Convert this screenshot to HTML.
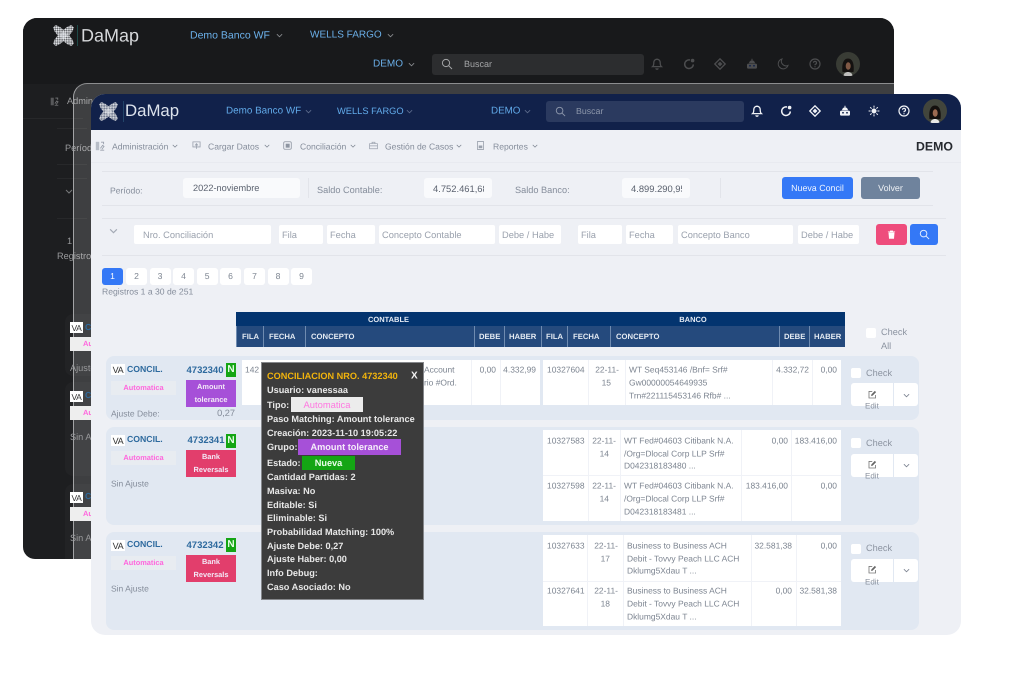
<!DOCTYPE html>
<html lang="es"><head><meta charset="utf-8"><title>DaMap</title>
<style>
*{box-sizing:border-box}
html,body{margin:0;padding:0;background:#fff}
body{width:1024px;height:695px;overflow:hidden;position:relative;font-family:"Liberation Sans",sans-serif;text-rendering:geometricPrecision}
#w{position:absolute;left:0;top:0;width:1024px;height:695px;filter:blur(.35px);overflow:hidden}
.a{position:absolute}
.t{position:absolute;white-space:nowrap;transform:translateY(calc(-50% + .6px));line-height:1}
.g{color:#858d9b;font-size:9.2px}
.m{font-size:8.6px}
.c{text-align:center}
.i{position:absolute;background:#fff;border-radius:2px;height:19px;top:225px;color:#9aa1ad;font-size:9.3px;line-height:20px;padding-left:9px;white-space:nowrap;overflow:hidden}
.pg{position:absolute;top:268px;height:17px;width:21px;background:#fff;border-radius:3px;text-align:center;color:#7d8591;font-size:8.6px;line-height:17px}
.th{position:absolute;top:326px;height:21px;background:#254a7d;border-left:1px solid #6f8bb0;color:#e5ebf3;font-size:7.7px;font-weight:bold;line-height:22px;padding-left:5px;white-space:nowrap}
.rowc{position:absolute;left:106px;width:813px;background:#e1e8f2;border-radius:8px}
.va{position:absolute;left:111px;width:14px;height:11px;background:#fff;color:#333;font-size:9px;line-height:12px;text-align:center;letter-spacing:-.3px}
.con{color:#2e6a9e;font-size:8.7px;font-weight:bold;left:127px}
.num{color:#2e6a9e;font-size:9.5px;font-weight:bold}
.n{position:absolute;left:226px;width:10px;height:14px;background:#14a514;color:#e8ffe8;font-size:10px;font-weight:bold;line-height:14px;text-align:center}
.au{position:absolute;left:111px;width:65px;height:14px;background:#e8ecf1;color:#ff66dd;font-size:7.4px;font-weight:bold;line-height:14px;text-align:center}
.tag{position:absolute;left:186px;width:50px;height:27px;color:#f3e9f7;font-size:7.4px;font-weight:bold;text-align:center;line-height:13.2px}
.tb{position:absolute;background:#fff}
.ln{position:absolute;background:#f0f2f7}
.d{color:#7d8591;font-size:8.45px}
.r{transform:translate(-100%,calc(-50% + .6px))}
.cb{position:absolute;width:10px;height:10px;background:#fff;border-radius:2px}
.chk{color:#8b93a0;font-size:9.2px}
.ed{position:absolute;left:851px;width:42px;height:23px;background:#fff;border-radius:3px 0 0 3px}
.ed2{position:absolute;left:894px;width:24px;height:23px;background:#fff;border-radius:0 3px 3px 0}
.tip{color:#e8e8e8;font-size:9.17px;font-weight:bold;left:267px}
.dk{color:#9a9b9d;font-size:9.2px}
.l{font-size:8.5px}
</style></head><body>
<svg width="0" height="0" style="position:absolute">
<defs>
<pattern id="ck" width="2.4" height="2.4" patternUnits="userSpaceOnUse" patternTransform="rotate(45)"><rect width="1.3" height="1.3" fill="#eceef2"/><rect x="1.2" y="1.2" width="1.2" height="1.2" fill="#eceef2"/></pattern>
<symbol id="logo" viewBox="0 0 20 20"><path d="M0 2.500 2.500 0 6.500 1.800 10 4.500 13.500 1.800 17.500 0 20 2.500 18.200 6.500 15.500 10 18.200 13.500 20 17.500 17.500 20 13.500 18.200 10 15.500 6.500 18.200 2.500 20 0 17.500 1.800 13.500 4.500 10 1.800 6.500Z" fill="#9a9da5" opacity=".45"/><path d="M0 2.500 2.500 0 6.500 1.800 10 4.500 13.500 1.800 17.500 0 20 2.500 18.200 6.500 15.500 10 18.200 13.500 20 17.500 17.500 20 13.500 18.200 10 15.500 6.500 18.200 2.500 20 0 17.500 1.800 13.500 4.500 10 1.800 6.500Z" fill="url(#ck)"/><path d="M10 6 14 10 10 14 6 10Z" fill="#e4e7ec" opacity=".55"/></symbol>
<symbol id="chev" viewBox="0 0 8 5"><path d="M1 1 4 4 7 1" fill="none" stroke="currentColor" stroke-width="1"/></symbol>
<symbol id="srch" viewBox="0 0 12 12"><circle cx="5" cy="5" r="3.6" fill="none" stroke="currentColor" stroke-width="1"/><path d="M7.8 7.8 11 11" stroke="currentColor" stroke-width="1"/></symbol>
<symbol id="bell" viewBox="0 0 12 12"><path d="M6 1.200A3.300 3.300 0 0 0 2.800 4.600c0 3-1.200 4-1.200 4h8.800s-1.200-1-1.200-4A3.300 3.300 0 0 0 6 1.200zM5 10.200a1 1 0 0 0 2 0" fill="none" stroke="currentColor" stroke-width="1.300"/></symbol>
<symbol id="ref" viewBox="0 0 12 12"><path d="M7 2A4.300 4.300 0 1 0 10.300 6.400" fill="none" stroke="currentColor" stroke-width="1.500"/><circle cx="9.600" cy="2.600" r="1.800" fill="currentColor"/></symbol>
<symbol id="dia" viewBox="0 0 12 12"><path d="M6 .8 11.200 6 6 11.200.8 6Z" fill="none" stroke="currentColor" stroke-width="1.300"/><path d="M6 3.600 8.400 6 6 8.400 3.600 6Z" fill="currentColor"/></symbol>
<symbol id="bot" viewBox="0 0 12 12"><path d="M3 5.200C3.400 3.200 4.600 2.400 6 2.400s2.600.8 3 2.800Z" fill="currentColor"/><path d="M6 .8v1.600" stroke="currentColor"/><rect x="1" y="5.600" width="10" height="5" rx="1.400" fill="currentColor"/><circle cx="4" cy="7.800" r=".9" fill="#11214a"/><circle cx="8" cy="7.800" r=".9" fill="#11214a"/></symbol>
<symbol id="sun" viewBox="0 0 12 12"><circle cx="6" cy="6" r="2.200" fill="currentColor" stroke="currentColor" stroke-width=".6"/><path d="M6 .6v2M6 9.400v2M.6 6h2M9.400 6h2M2.200 2.200l1.400 1.400M8.400 8.400l1.400 1.400M9.800 2.200 8.400 3.600M3.600 8.400 2.200 9.800" stroke="currentColor" stroke-width="1"/></symbol>
<symbol id="moon" viewBox="0 0 12 12"><path d="M5 1a5 5 0 1 0 6 6.400A4.600 4.600 0 0 1 5 1Z" fill="none" stroke="currentColor" stroke-width="1"/></symbol>
<symbol id="help" viewBox="0 0 12 12"><circle cx="6" cy="6" r="5" fill="none" stroke="currentColor" stroke-width="1.200"/><path d="M4.500 4.800A1.500 1.500 0 1 1 6.300 6.300C6 6.500 6 6.800 6 7.200M6 8.200v1" fill="none" stroke="currentColor" stroke-width="1.200"/></symbol>
<symbol id="ava" viewBox="0 0 24 24"><circle cx="12" cy="12" r="12" fill="#42453c"/><path d="M6.500 20C5.500 12 7.500 6.500 12 6.500S18.500 12 17.500 20Z" fill="#14100e"/><ellipse cx="12.200" cy="14" rx="2.500" ry="3.800" fill="#9c6a50"/><path d="M7.500 23.500c.5-2.500 2.500-3.500 4.500-3.500s4 1 4.500 3.500a12 12 0 0 1-9 0Z" fill="#e9e9e6"/></symbol>
<symbol id="m1" viewBox="0 0 10 10"><path d="M.8.8h3.400v8.400H.8z" fill="currentColor" opacity=".65"/><path d="M5.200 9.200h4M5.400 7.400 7.600 4.400l1.400 1-2.200 3M6 1.200h2.600v2" fill="none" stroke="currentColor" stroke-width=".9"/></symbol>
<symbol id="m2" viewBox="0 0 10 10"><path d="M1 1h8v5.600H1zM5 8.800V3M3.400 5 5 3l1.600 2" fill="none" stroke="currentColor" stroke-width=".9"/></symbol>
<symbol id="m3" viewBox="0 0 10 10"><rect x=".8" y=".8" width="8.400" height="8.400" rx="1.400" fill="none" stroke="currentColor" stroke-width=".9"/><rect x="3" y="3" width="4.400" height="4.400" fill="currentColor"/></symbol>
<symbol id="m4" viewBox="0 0 10 10"><path d="M.6 3h8.800v5.600H.6zM3.400 3V1.400h3.200V3M.6 5.400h8.800" fill="none" stroke="currentColor" stroke-width=".8"/></symbol>
<symbol id="m5" viewBox="0 0 10 10"><path d="M1.600.6h6.800v8.800H1.600z" fill="none" stroke="currentColor" stroke-width=".9"/><rect x="3" y="5" width="4" height="3" fill="currentColor"/></symbol>
<symbol id="trash" viewBox="0 0 10 10"><path d="M1 2h8M3.600 2V1h2.800v1M2 3h6l-.5 6.400h-5Z" fill="currentColor" stroke="currentColor" stroke-width=".6"/></symbol>
<symbol id="edit" viewBox="0 0 10 10"><path d="M8.400 5.500v3.400H1.100V1.600h3.600" fill="none" stroke="#777" stroke-width=".9"/><path d="M3.400 6.600 3.800 4.800 7.600 1 9 2.400 5.200 6.200Z" fill="#666"/></symbol>
</defs></svg>
<div id="w">

<!-- dark window -->
<div class="a" style="left:23px;top:18px;width:871px;height:541px;background:#1d1e20;border-radius:14px 14px 0 12px;overflow:hidden">
 <div class="a" style="left:0;top:0;width:871px;height:66px;background:#18191b"></div>
</div>
<svg class="a" style="left:53px;top:25px" width="21" height="21"><use href="#logo"/></svg>
<div class="a" style="left:77px;top:25px;width:1px;height:21px;background:#1e4a48"></div>
<div class="t" style="left:81px;top:35px;font-size:18px;color:#d7d9dc">DaMap</div>
<div class="t" style="left:190px;top:35px;font-size:10.5px;color:#6bb0ea">Demo Banco WF</div>
<svg class="a" style="left:276px;top:33px;color:#8a8c90" width="7" height="5"><use href="#chev"/></svg>
<div class="t" style="left:310px;top:35px;font-size:10px;color:#6bb0ea">WELLS FARGO</div>
<svg class="a" style="left:387px;top:33px;color:#8a8c90" width="7" height="5"><use href="#chev"/></svg>
<div class="t" style="left:373px;top:64px;font-size:10px;color:#6bb0ea">DEMO</div>
<svg class="a" style="left:408px;top:62px;color:#8a8c90" width="7" height="5"><use href="#chev"/></svg>
<div class="a" style="left:432px;top:54px;width:212px;height:21px;background:#2c2d2f;border-radius:3px"></div>
<svg class="a" style="left:441px;top:58px;color:#a5a6a8" width="12" height="12"><use href="#srch"/></svg>
<div class="t" style="left:464px;top:64px;font-size:9px;color:#a5a6a8">Buscar</div>
<svg class="a" style="left:651px;top:58px;color:#4c4d4f" width="12" height="12"><use href="#bell"/></svg>
<svg class="a" style="left:683px;top:58px;color:#4c4d4f" width="12" height="12"><use href="#ref"/></svg>
<svg class="a" style="left:714px;top:58px;color:#4c4d4f" width="12" height="12"><use href="#dia"/></svg>
<svg class="a" style="left:746px;top:58px;color:#4c4d4f" width="12" height="12"><use href="#bot"/></svg>
<svg class="a" style="left:777px;top:58px;color:#4c4d4f" width="12" height="12"><use href="#moon"/></svg>
<svg class="a" style="left:809px;top:58px;color:#4c4d4f" width="12" height="12"><use href="#help"/></svg>
<svg class="a" style="left:836px;top:52px;opacity:.8" width="24" height="24"><use href="#ava"/></svg>
<svg class="a" style="left:50px;top:97px;color:#77787a" width="9" height="9"><use href="#m1"/></svg>
<div class="t dk" style="left:67px;top:101px">Admin</div>
<div class="a" style="left:23px;top:118px;width:60px;height:1px;background:#27282a"></div>
<div class="a" style="left:57px;top:128px;width:30px;height:1px;background:#27282a"></div>
<div class="t dk" style="left:65px;top:148px">Período</div>
<div class="a" style="left:57px;top:164px;width:30px;height:1px;background:#27282a"></div>
<div class="a" style="left:57px;top:178px;width:30px;height:1px;background:#27282a"></div>
<svg class="a" style="left:65px;top:189px;color:#77787a" width="8" height="5"><use href="#chev"/></svg>
<div class="a" style="left:57px;top:218px;width:30px;height:1px;background:#27282a"></div>
<div class="t dk" style="left:67px;top:241px">1</div>
<div class="t dk" style="left:57px;top:256px">Registros</div>
<div class="a" style="left:65px;top:314px;width:30px;height:62px;background:#222325;border-radius:8px 0 0 8px"></div>
<div class="a" style="left:65px;top:382px;width:30px;height:94px;background:#222325;border-radius:8px 0 0 8px"></div>
<div class="a" style="left:65px;top:484px;width:30px;height:75px;background:#222325;border-radius:8px 0 0 0"></div>

<!-- translucent middle window -->
<div class="a" style="left:73px;top:83px;width:821px;height:476px;background:rgba(255,255,255,.15);border-left:1px solid #a2a3a5;border-top:1px solid #8c8d8f;border-radius:14px 0 0 0"></div>
<div class="a va" style="left:70px;top:322px;width:13px;height:11px;font-size:8.5px">VA</div>
<div class="a" style="left:70px;top:337px;width:25px;height:14px;background:#eee;color:#ff66dd;font-size:7.5px;font-weight:bold;line-height:14px;padding-left:13px;overflow:hidden">Au</div>
<div class="t dk" style="left:70px;top:368px">Ajuste</div>
<div class="t con" style="left:85px;top:327px">C</div>
<div class="a va" style="left:70px;top:391px;width:13px;height:11px;font-size:8.5px">VA</div>
<div class="a" style="left:70px;top:406px;width:25px;height:14px;background:#eee;color:#ff66dd;font-size:7.5px;font-weight:bold;line-height:14px;padding-left:13px;overflow:hidden">Au</div>
<div class="t dk" style="left:70px;top:437px">Sin Aj</div>
<div class="t con" style="left:85px;top:395px">C</div>
<div class="a va" style="left:70px;top:492px;width:13px;height:11px;font-size:8.5px">VA</div>
<div class="a" style="left:70px;top:507px;width:25px;height:14px;background:#eee;color:#ff66dd;font-size:7.5px;font-weight:bold;line-height:14px;padding-left:13px;overflow:hidden">Au</div>
<div class="t dk" style="left:70px;top:538px">Sin Aj</div>
<div class="t con" style="left:85px;top:496px">C</div>

<!-- light window -->
<div class="a" style="left:91px;top:94px;width:870px;height:541px;background:#eef0f5;border-radius:14px"></div>
<div class="a" style="left:91px;top:94px;width:870px;height:36px;background:#11214a;border-radius:14px 14px 0 0"></div>
<svg class="a" style="left:99px;top:102px" width="19" height="19"><use href="#logo"/></svg>
<div class="a" style="left:123px;top:101px;width:1px;height:21px;background:#23456a"></div>
<div class="t" style="left:125px;top:111px;font-size:16.8px;color:#dce2ec">DaMap</div>
<div class="t" style="left:226px;top:111px;font-size:9.9px;color:#62abea">Demo Banco WF</div>
<svg class="a" style="left:305px;top:109px;color:#5d6c8c" width="7" height="5"><use href="#chev"/></svg>
<div class="t" style="left:337px;top:111px;font-size:9.3px;color:#62abea">WELLS FARGO</div>
<svg class="a" style="left:406px;top:109px;color:#5d6c8c" width="7" height="5"><use href="#chev"/></svg>
<div class="t" style="left:491px;top:111px;font-size:9.8px;color:#62abea">DEMO</div>
<svg class="a" style="left:524px;top:109px;color:#5d6c8c" width="7" height="5"><use href="#chev"/></svg>
<div class="a" style="left:546px;top:101px;width:198px;height:21px;background:#2b3a5f;border-radius:3px"></div>
<svg class="a" style="left:555px;top:106px;color:#8d97ab" width="11" height="11"><use href="#srch"/></svg>
<div class="t" style="left:576px;top:111px;font-size:8.8px;color:#8d97ab">Buscar</div>
<svg class="a" style="left:751px;top:105px;color:#f1f3f7" width="12" height="12"><use href="#bell"/></svg>
<svg class="a" style="left:780px;top:105px;color:#f1f3f7" width="12" height="12"><use href="#ref"/></svg>
<svg class="a" style="left:809px;top:105px;color:#f1f3f7" width="12" height="12"><use href="#dia"/></svg>
<svg class="a" style="left:839px;top:105px;color:#f1f3f7" width="12" height="12"><use href="#bot"/></svg>
<svg class="a" style="left:868px;top:105px;color:#f1f3f7" width="12" height="12"><use href="#sun"/></svg>
<svg class="a" style="left:898px;top:105px;color:#f1f3f7" width="12" height="12"><use href="#help"/></svg>
<svg class="a" style="left:923px;top:99px" width="24" height="24"><use href="#ava"/></svg>

<!-- menu -->
<svg class="a" style="left:95px;top:141px;color:#9aa1ad" width="10" height="10"><use href="#m1"/></svg>
<div class="t g m" style="left:112px;top:146px">Administración</div>
<svg class="a" style="left:172px;top:144px;color:#7d8591" width="6" height="4"><use href="#chev"/></svg>
<svg class="a" style="left:192px;top:141px;color:#9aa1ad" width="9" height="9"><use href="#m2"/></svg>
<div class="t g m" style="left:208px;top:146px">Cargar Datos</div>
<svg class="a" style="left:264px;top:144px;color:#7d8591" width="6" height="4"><use href="#chev"/></svg>
<svg class="a" style="left:283px;top:141px;color:#8e95a1" width="9" height="9"><use href="#m3"/></svg>
<div class="t g m" style="left:300px;top:146px">Conciliación</div>
<svg class="a" style="left:350px;top:144px;color:#7d8591" width="6" height="4"><use href="#chev"/></svg>
<svg class="a" style="left:369px;top:141px;color:#9aa1ad" width="9" height="9"><use href="#m4"/></svg>
<div class="t g m" style="left:385px;top:146px">Gestión de Casos</div>
<svg class="a" style="left:456px;top:144px;color:#7d8591" width="6" height="4"><use href="#chev"/></svg>
<svg class="a" style="left:476px;top:141px;color:#9aa1ad" width="9" height="9"><use href="#m5"/></svg>
<div class="t g m" style="left:493px;top:146px">Reportes</div>
<svg class="a" style="left:532px;top:144px;color:#7d8591" width="6" height="4"><use href="#chev"/></svg>
<div class="t" style="left:916px;top:146px;font-size:12.3px;font-weight:bold;color:#26292f">DEMO</div>
<div class="a" style="left:91px;top:162px;width:870px;height:1px;background:#e8eaf0"></div>

<!-- form row -->
<div class="a" style="left:102px;top:171px;width:831px;height:1px;background:#e2e4ea"></div>
<div class="a" style="left:102px;top:205px;width:831px;height:1px;background:#e2e4ea"></div>
<div class="t g" style="left:110px;top:190px;font-size:8.6px">Período:</div>
<div class="a" style="left:183px;top:178px;width:117px;height:20px;background:#f9fafc;border-radius:3px"></div>
<div class="t" style="left:193px;top:188px;font-size:9.2px;color:#5c6370">2022-noviembre</div>
<div class="a" style="left:308px;top:178px;width:1px;height:20px;background:#e2e4ea"></div>
<div class="t g" style="left:317px;top:190px">Saldo Contable:</div>
<div class="a" style="left:424px;top:178px;width:68px;height:20px;background:#f9fafc;border-radius:3px"></div>
<div class="a" style="left:433px;top:182px;width:51px;height:12px;overflow:hidden;font-size:9.4px;line-height:13px;color:#5c6370;white-space:nowrap">4.752.461,68</div>
<div class="t g" style="left:515px;top:190px">Saldo Banco:</div>
<div class="a" style="left:622px;top:178px;width:68px;height:20px;background:#f9fafc;border-radius:3px"></div>
<div class="a" style="left:631px;top:182px;width:51px;height:12px;overflow:hidden;font-size:9.4px;line-height:13px;color:#5c6370;white-space:nowrap">4.899.290,95</div>
<div class="a" style="left:720px;top:178px;width:1px;height:20px;background:#e2e4ea"></div>
<div class="a c" style="left:782px;top:177px;width:71px;height:22px;background:#3478f6;border-radius:3px;color:#eef4ff;font-size:8.9px;line-height:23px">Nueva Concil</div>
<div class="a c" style="left:861px;top:177px;width:59px;height:22px;background:#6f839d;border-radius:3px;color:#eef1f5;font-size:8.9px;line-height:23px">Volver</div>

<!-- filter row -->
<div class="a" style="left:102px;top:218px;width:844px;height:1px;background:#e2e4ea"></div>
<div class="a" style="left:102px;top:255px;width:844px;height:1px;background:#e2e4ea"></div>
<svg class="a" style="left:109px;top:228px;color:#a3a9b4" width="9" height="6"><use href="#chev"/></svg>
<div class="i" style="left:134px;width:137px">Nro. Conciliación</div>
<div class="i" style="left:279px;width:44px;padding-left:3px">Fila</div>
<div class="i" style="left:327px;width:48px;padding-left:3px">Fecha</div>
<div class="i" style="left:379px;width:116px;padding-left:3px">Concepto Contable</div>
<div class="i" style="left:499px;width:62px;padding-left:3px">Debe / Habe</div>
<div class="i" style="left:578px;width:44px;padding-left:3px">Fila</div>
<div class="i" style="left:626px;width:47px;padding-left:3px">Fecha</div>
<div class="i" style="left:678px;width:115px;padding-left:3px">Concepto Banco</div>
<div class="i" style="left:798px;width:61px;padding-left:3px">Debe / Habe</div>
<div class="a" style="left:876px;top:224px;width:31px;height:21px;background:#ee4c7c;border-radius:3px"></div>
<svg class="a" style="left:887px;top:230px;color:#fff" width="9" height="9"><use href="#trash"/></svg>
<div class="a" style="left:910px;top:224px;width:28px;height:21px;background:#3478f6;border-radius:3px"></div>
<svg class="a" style="left:919px;top:229px;color:#eaf2ff" width="11" height="11"><use href="#srch"/></svg>

<!-- pagination -->
<div class="pg" style="left:102px;background:#3478f6;color:#fff">1</div>
<div class="pg" style="left:126px">2</div>
<div class="pg" style="left:149.5px">3</div>
<div class="pg" style="left:173px">4</div>
<div class="pg" style="left:196.7px">5</div>
<div class="pg" style="left:220px">6</div>
<div class="pg" style="left:244px">7</div>
<div class="pg" style="left:267.5px">8</div>
<div class="pg" style="left:291px">9</div>
<div class="t g" style="left:102px;top:291px;font-size:8.6px">Registros 1 a 30 de 251</div>

<!-- table head -->
<div class="a c" style="left:236px;top:312px;width:305px;height:14px;background:#03346f;color:#e6ecf5;font-size:7.5px;font-weight:bold;line-height:15px">CONTABLE</div>
<div class="a c" style="left:541px;top:312px;width:304px;height:14px;background:#03346f;color:#e6ecf5;font-size:7.5px;font-weight:bold;line-height:15px">BANCO</div>
<div class="th" style="left:236px;width:27px">FILA</div>
<div class="th" style="left:263px;width:42px">FECHA</div>
<div class="th" style="left:305px;width:169px">CONCEPTO</div>
<div class="th" style="left:474px;width:30px;padding-left:4px">DEBE</div>
<div class="th" style="left:504px;width:37px;padding-left:4px">HABER</div>
<div class="th" style="left:541px;width:26px;padding-left:4px">FILA</div>
<div class="th" style="left:567px;width:43px">FECHA</div>
<div class="th" style="left:610px;width:169px">CONCEPTO</div>
<div class="th" style="left:779px;width:30px;padding-left:4px">DEBE</div>
<div class="th" style="left:809px;width:36px;padding-left:4px">HABER</div>
<div class="cb" style="left:866px;top:328px"></div>
<div class="t chk" style="left:881px;top:332px">Check</div>
<div class="t chk" style="left:881px;top:346px">All</div>

<!-- row cards -->
<div class="rowc" style="top:356px;height:64px"></div>
<div class="rowc" style="top:427px;height:98px"></div>
<div class="rowc" style="top:532px;height:98px"></div>

<!-- row1 left -->
<div class="va" style="top:364px">VA</div>
<div class="t con" style="top:369px">CONCIL.</div>
<div class="t num" style="left:186.5px;top:370px">4732340</div>
<div class="n" style="top:363px">N</div>
<div class="au" style="top:381px">Automatica</div>
<div class="tag" style="top:380px;background:#a650d8">Amount<br>tolerance</div>
<div class="t g l" style="left:111px;top:413px">Ajuste Debe:</div>
<div class="t g r" style="left:235px;top:413px">0,27</div>

<!-- row2 left -->
<div class="va" style="top:435px">VA</div>
<div class="t con" style="top:439px">CONCIL.</div>
<div class="t num" style="left:187.5px;top:440px">4732341</div>
<div class="n" style="top:434px">N</div>
<div class="au" style="top:451px">Automatica</div>
<div class="tag" style="top:450px;background:#e23e6c">Bank<br>Reversals</div>
<div class="t g l" style="left:111px;top:483px">Sin Ajuste</div>

<!-- row3 left -->
<div class="va" style="top:540px">VA</div>
<div class="t con" style="top:544px">CONCIL.</div>
<div class="t num" style="left:186.5px;top:545px">4732342</div>
<div class="n" style="top:538px">N</div>
<div class="au" style="top:556px">Automatica</div>
<div class="tag" style="top:555px;background:#e23e6c">Bank<br>Reversals</div>
<div class="t g l" style="left:111px;top:588px">Sin Ajuste</div>

<!-- contable row1 -->
<div class="tb" style="left:242px;top:360px;width:298px;height:45px"></div>
<div class="ln" style="left:471px;top:360px;width:1px;height:45px"></div>
<div class="ln" style="left:500px;top:360px;width:1px;height:45px"></div>
<div class="t d" style="left:245px;top:369px">142</div>
<div class="t d" style="left:424px;top:369px">Account</div>
<div class="t d" style="left:424px;top:382px">rio #Ord.</div>
<div class="t d r" style="left:496px;top:369px">0,00</div>
<div class="t d r" style="left:536px;top:369px">4.332,99</div>

<!-- banco row1 -->
<div class="tb" style="left:543px;top:360px;width:298px;height:45px"></div>
<div class="ln" style="left:588px;top:360px;width:1px;height:45px"></div>
<div class="ln" style="left:625px;top:360px;width:1px;height:45px"></div>
<div class="ln" style="left:772px;top:360px;width:1px;height:45px"></div>
<div class="ln" style="left:812px;top:360px;width:1px;height:45px"></div>
<div class="t d" style="left:547px;top:369px">10327604</div>
<div class="t d r" style="left:619px;top:369px">22-11-</div>
<div class="t d r" style="left:611px;top:382px">15</div>
<div class="t d" style="left:629px;top:369px">WT Seq453146 /Bnf= Srf#</div>
<div class="t d" style="left:629px;top:382px">Gw00000054649935</div>
<div class="t d" style="left:629px;top:395px">Trn#221115453146 Rfb# ...</div>
<div class="t d r" style="left:809px;top:369px">4.332,72</div>
<div class="t d r" style="left:837px;top:369px">0,00</div>

<!-- banco row2 -->
<div class="tb" style="left:543px;top:430px;width:298px;height:91px"></div>
<div class="ln" style="left:543px;top:475px;width:298px;height:1px"></div>
<div class="ln" style="left:588px;top:430px;width:1px;height:91px"></div>
<div class="ln" style="left:620px;top:430px;width:1px;height:91px"></div>
<div class="ln" style="left:741px;top:430px;width:1px;height:91px"></div>
<div class="ln" style="left:791px;top:430px;width:1px;height:91px"></div>
<div class="t d" style="left:547px;top:440px">10327583</div>
<div class="t d r" style="left:616px;top:440px">22-11-</div>
<div class="t d r" style="left:609px;top:453px">14</div>
<div class="t d" style="left:624px;top:440px">WT Fed#04603 Citibank N.A.</div>
<div class="t d" style="left:624px;top:452.5px">/Org=Dlocal Corp LLP Srf#</div>
<div class="t d" style="left:624px;top:465px">D042318183480 ...</div>
<div class="t d r" style="left:788px;top:440px">0,00</div>
<div class="t d r" style="left:837px;top:440px">183.416,00</div>
<div class="t d" style="left:547px;top:485px">10327598</div>
<div class="t d r" style="left:616px;top:485px">22-11-</div>
<div class="t d r" style="left:609px;top:498px">14</div>
<div class="t d" style="left:624px;top:485px">WT Fed#04603 Citibank N.A.</div>
<div class="t d" style="left:624px;top:498px">/Org=Dlocal Corp LLP Srf#</div>
<div class="t d" style="left:624px;top:511px">D042318183481 ...</div>
<div class="t d r" style="left:788px;top:485px">183.416,00</div>
<div class="t d r" style="left:837px;top:485px">0,00</div>

<!-- banco row3 -->
<div class="tb" style="left:543px;top:535px;width:298px;height:91px"></div>
<div class="ln" style="left:543px;top:581px;width:298px;height:1px"></div>
<div class="ln" style="left:587px;top:535px;width:1px;height:91px"></div>
<div class="ln" style="left:623px;top:535px;width:1px;height:91px"></div>
<div class="ln" style="left:751px;top:535px;width:1px;height:91px"></div>
<div class="ln" style="left:796px;top:535px;width:1px;height:91px"></div>
<div class="t d" style="left:547px;top:545px">10327633</div>
<div class="t d r" style="left:618px;top:545px">22-11-</div>
<div class="t d r" style="left:610px;top:558px">17</div>
<div class="t d" style="left:627px;top:545px">Business to Business ACH</div>
<div class="t d" style="left:627px;top:558px">Debit - Tovvy Peach LLC ACH</div>
<div class="t d" style="left:627px;top:570px">Dklumg5Xdau T ...</div>
<div class="t d r" style="left:792px;top:545px">32.581,38</div>
<div class="t d r" style="left:837px;top:545px">0,00</div>
<div class="t d" style="left:547px;top:590px">10327641</div>
<div class="t d r" style="left:618px;top:590px">22-11-</div>
<div class="t d r" style="left:610px;top:603px">18</div>
<div class="t d" style="left:627px;top:590px">Business to Business ACH</div>
<div class="t d" style="left:627px;top:603px">Debit - Tovvy Peach LLC ACH</div>
<div class="t d" style="left:627px;top:616px">Dklumg5Xdau T ...</div>
<div class="t d r" style="left:792px;top:590px">0,00</div>
<div class="t d r" style="left:837px;top:590px">32.581,38</div>

<!-- right controls -->
<div class="cb" style="left:851px;top:368px"></div>
<div class="t chk" style="left:866px;top:373px">Check</div>
<div class="ed" style="top:383px"></div><div class="ed2" style="top:383px"></div>
<svg class="a" style="left:868px;top:390px" width="9" height="9"><use href="#edit"/></svg>
<div class="t" style="left:865px;top:406px;font-size:8px;color:#8b93a0">Edit</div>
<svg class="a" style="left:903px;top:393px;color:#7d8591" width="7" height="5"><use href="#chev"/></svg>

<div class="cb" style="left:851px;top:438px"></div>
<div class="t chk" style="left:866px;top:443px">Check</div>
<div class="ed" style="top:454px"></div><div class="ed2" style="top:454px"></div>
<svg class="a" style="left:868px;top:460px" width="9" height="9"><use href="#edit"/></svg>
<div class="t" style="left:865px;top:476px;font-size:8px;color:#8b93a0">Edit</div>
<svg class="a" style="left:903px;top:463px;color:#7d8591" width="7" height="5"><use href="#chev"/></svg>

<div class="cb" style="left:851px;top:544px"></div>
<div class="t chk" style="left:866px;top:548px">Check</div>
<div class="ed" style="top:559px"></div><div class="ed2" style="top:559px"></div>
<svg class="a" style="left:868px;top:565px" width="9" height="9"><use href="#edit"/></svg>
<div class="t" style="left:865px;top:582px;font-size:8px;color:#8b93a0">Edit</div>
<svg class="a" style="left:903px;top:568px;color:#7d8591" width="7" height="5"><use href="#chev"/></svg>

<!-- tooltip -->
<div class="a" style="left:261px;top:362px;width:163px;height:238px;background:#3c3c3c;border:1px solid #85878b"></div>
<div class="t tip" style="top:376px;color:#f2b40c">CONCILIACION NRO. 4732340</div>
<div class="t tip" style="left:411px;top:376px;color:#f2f2f2;font-size:10px">X</div>
<div class="t tip" style="top:390px">Usuario: vanessaa</div>
<div class="t tip" style="top:404.5px">Tipo:</div>
<div class="a c" style="left:291px;top:397px;width:72px;height:15px;background:#ececec;color:#ff77e0;font-size:9.4px;line-height:16px">Automatica</div>
<div class="t tip" style="top:419px">Paso Matching: Amount tolerance</div>
<div class="t tip" style="top:432.5px">Creación: 2023-11-10 19:05:22</div>
<div class="t tip" style="top:447px">Grupo:</div>
<div class="a c" style="left:298px;top:439px;width:103px;height:16px;background:#a650d8;color:#f5ecfa;font-size:9.2px;font-weight:bold;line-height:17px">Amount tolerance</div>
<div class="t tip" style="top:463px">Estado:</div>
<div class="a c" style="left:302px;top:456px;width:53px;height:14px;background:#14a514;color:#eaffea;font-size:9.2px;font-weight:bold;line-height:15px">Nueva</div>
<div class="t tip" style="top:477px">Cantidad Partidas: 2</div>
<div class="t tip" style="top:491px">Masiva: No</div>
<div class="t tip" style="top:504.5px">Editable: Si</div>
<div class="t tip" style="top:518px">Eliminable: Si</div>
<div class="t tip" style="top:532px">Probabilidad Matching: 100%</div>
<div class="t tip" style="top:545.5px">Ajuste Debe: 0,27</div>
<div class="t tip" style="top:559px">Ajuste Haber: 0,00</div>
<div class="t tip" style="top:573px">Info Debug:</div>
<div class="t tip" style="top:587px">Caso Asociado: No</div>
</div>
</body></html>
